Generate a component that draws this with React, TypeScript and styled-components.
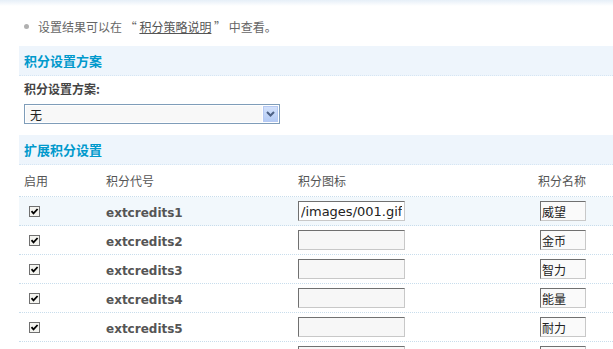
import styled, { createGlobalStyle } from "styled-components";

const GlobalStyle = createGlobalStyle`
  body {
    margin: 0;
    background: #ffffff;
    font-family: "Noto Sans CJK SC", "DejaVu Sans", sans-serif;
    font-size: 12px;
    color: #555555;
  }
`;

const credits = [
  { code: "extcredits1", icon: "/images/001.gif", name: "威望" },
  { code: "extcredits2", icon: "", name: "金币" },
  { code: "extcredits3", icon: "", name: "智力" },
  { code: "extcredits4", icon: "", name: "能量" },
  { code: "extcredits5", icon: "", name: "耐力" },
  { code: "extcredits6", icon: "", name: "" },
];

const CheckMark = () => (
  <svg width="11" height="11" viewBox="0 0 11 11">
    <rect x="0.5" y="0.5" width="10" height="10" fill="#f4f4f0" stroke="#707070" />
    <path d="M2.5 5.2 L4.5 7.4 L8.6 3" fill="none" stroke="#000" strokeWidth="1.8" />
  </svg>
);

const Chevron = () => (
  <svg width="9" height="6" viewBox="0 0 9 6">
    <path d="M1 1 L4.5 4.5 L8 1" fill="none" stroke="#4d6185" strokeWidth="2" />
  </svg>
);

const App = () => {
  return (
    <Page>
      <GlobalStyle />
      <TopBar />
      <Tips>
        <Tip>
          设置结果可以在 “ <TipLink>积分策略说明</TipLink> ” 中查看。
        </Tip>
      </Tips>
      <Body>
        <SectionTitle>积分设置方案</SectionTitle>
        <Field>
          <Label>积分设置方案:</Label>
          <Select>
            <SelectValue>无</SelectValue>
            <SelectArrow>
              <Chevron />
            </SelectArrow>
          </Select>
        </Field>
        <SectionTitle $gap>扩展积分设置</SectionTitle>
        <HeadRow>
          <HeadCell>启用</HeadCell>
          <HeadCell>积分代号</HeadCell>
          <HeadCell>积分图标</HeadCell>
          <HeadCell>积分名称</HeadCell>
        </HeadRow>
        {credits.map((c, i) => (
          <Row key={c.code} $hover={i === 0}>
            <Cell>
              <Check>
                <CheckMark />
              </Check>
            </Cell>
            <Cell>
              <Code>{c.code}</Code>
            </Cell>
            <Cell>
              <IconInput defaultValue={c.icon} $filled={c.icon !== ""} />
            </Cell>
            <Cell>
              <NameInput defaultValue={c.name} />
            </Cell>
          </Row>
        ))}
      </Body>
    </Page>
  );
};

export default App;

const Page = styled.div`
  width: 613px;
  height: 349px;
  overflow: hidden;
`;

const TopBar = styled.div`
  height: 6px;
  background: linear-gradient(#e6eff8, #ffffff);
`;

const Tips = styled.ul`
  list-style: none;
  margin: 10px 0 0;
  padding: 0 0 0 24px;
`;

const Tip = styled.li`
  display: flex;
  align-items: center;
  height: 20px;
  color: #666666;
  white-space: pre;
  &::before {
    content: "";
    width: 5px;
    height: 5px;
    border-radius: 50%;
    background: #b0b0b0;
    margin-right: 9px;
  }
`;

const TipLink = styled.span`
  color: #555555;
  text-decoration: underline;
`;

const Body = styled.div`
  margin: 10px 0 0 19px;
`;

const SectionTitle = styled.div<{ $gap?: boolean }>`
  height: 29px;
  margin-top: ${(p) => (p.$gap ? "11px" : "0")};
  padding-left: 5px;
  display: flex;
  align-items: center;
  background: #eef5fc;
  border-bottom: 1px dotted #d6e6f4;
  color: #0099cc;
  font-size: 13px;
  font-weight: bold;
`;

const Field = styled.div`
  padding-left: 5px;
`;

const Label = styled.div`
  margin-top: 3px;
  height: 20px;
  line-height: 20px;
  font-weight: bold;
  color: #444444;
`;

const Select = styled.div`
  margin-top: 5px;
  width: 256px;
  height: 20px;
  box-sizing: border-box;
  border: 1px solid #7f9db9;
  background: #ffffff;
  display: flex;
  align-items: center;
  padding: 1px;
`;

const SelectValue = styled.div`
  flex: 1;
  height: 100%;
  background: #f8f8f8;
  padding-left: 4px;
  display: flex;
  align-items: center;
  color: #222222;
  font-size: 12px;
`;

const SelectArrow = styled.div`
  width: 15px;
  height: 16px;
  margin-left: 1px;
  box-sizing: border-box;
  border: 1px solid #b5c9f3;
  background: linear-gradient(#d3e1fb, #b4cbf5);
  display: flex;
  align-items: center;
  justify-content: center;
`;

const grid = `
  display: grid;
  grid-template-columns: 82px 192px 240px 1fr;
  border-bottom: 1px dotted #c8ddec;
`;

const HeadRow = styled.div`
  ${grid};
  height: 31px;
`;

const HeadCell = styled.div`
  padding-left: 5px;
  display: flex;
  align-items: center;
  color: #555555;
`;

const Row = styled.div<{ $hover?: boolean }>`
  ${grid};
  height: 28px;
  background: ${(p) => (p.$hover ? "#f2f8fc" : "transparent")};
`;

const Cell = styled.div`
  padding-left: 5px;
  display: flex;
  align-items: center;
`;

const Check = styled.span`
  display: flex;
  margin-left: 5px;
`;

const Code = styled.span`
  padding-top: 3px;
  font-family: "DejaVu Sans", sans-serif;
  font-weight: bold;
  font-size: 12px;
  color: #555555;
`;

const inputBase = `
  box-sizing: border-box;
  height: 20px;
  margin: 0;
  border: 1px solid;
  border-color: #707070 #c8c8c8 #c8c8c8 #707070;
  outline: 0;
  color: #222222;
`;

const IconInput = styled.input<{ $filled?: boolean }>`
  ${inputBase};
  width: 107px;
  padding: 0 2px;
  font-family: "DejaVu Sans", sans-serif;
  font-size: 13px;
  background: ${(p) => (p.$filled ? "#ffffff" : "#f7f7f7")};
`;

const NameInput = styled.input`
  ${inputBase};
  margin-left: 2px;
  width: 46px;
  padding: 0 1px;
  font-family: "Noto Sans CJK SC", sans-serif;
  font-size: 12px;
  background: #fafafa;
`;
